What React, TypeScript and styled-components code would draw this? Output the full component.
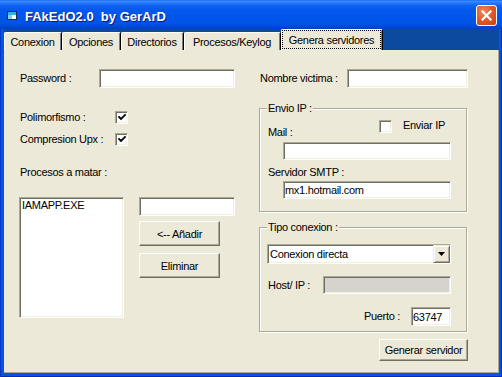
import React from "react";
import styled, { createGlobalStyle } from "styled-components";

const GlobalStyle = createGlobalStyle`
  html, body { margin: 0; padding: 0; width: 502px; height: 377px; overflow: hidden; background: #0055E5; }
  #root { width: 502px; height: 377px; }
  *, *::before, *::after { box-sizing: border-box; }
`;

const Window = styled.div`
  width: 502px;
  height: 377px;
  display: flex;
  flex-direction: column;
  font-family: "Liberation Sans", Arial, sans-serif;
  font-size: 11px;
  color: #000;
`;

const TitleBar = styled.div`
  height: 29px;
  flex: none;
  display: flex;
  align-items: center;
  padding: 0 5px 0 7px;
  background: linear-gradient(
    180deg,
    #0A5DF5 0px,
    #3D8FFF 1px,
    #2877FA 3px,
    #0B60F2 6px,
    #0558EE 10px,
    #0055EA 18px,
    #0053E4 24px,
    #0047D4 27px,
    #003FC6 29px
  );
`;

const TitleIcon = styled.svg`
  flex: none;
  margin-top: 1px;
`;

const TitleText = styled.span`
  flex: 1;
  margin-left: 8px;
  padding-top: 3px;
  color: #fff;
  font-weight: bold;
  font-size: 13px;
  white-space: pre;
  text-shadow: 1px 1px 0 #0A1A78;
`;

const CloseButton = styled.div`
  flex: none;
  width: 21px;
  height: 21px;
  margin-top: 1px;
  border: 1px solid #fff;
  border-radius: 3px;
  background: radial-gradient(circle at 35% 30%, #F08A64 0%, #E25A2C 45%, #C8400F 100%);
  display: flex;
  align-items: center;
  justify-content: center;
`;

const Frame = styled.div`
  flex: 1;
  display: flex;
  flex-direction: column;
  padding: 0 3px 4px 4px;
  background: #0055E5;
  box-shadow: inset 1px 0 0 #0838C8, inset -1px 0 0 #0030B0, inset 0 -1px 0 #0030B0;
`;

const TabStrip = styled.div`
  height: 21px;
  flex: none;
  display: flex;
  align-items: flex-end;
  background: #0B4A9E;
`;

const Tab = styled.div<{ $w: number; $active?: boolean }>`
  flex: none;
  width: ${(p) => p.$w}px;
  height: ${(p) => (p.$active ? 21 : 18)}px;
  background: #ECE9D8;
  border-left: 1px solid #fff;
  border-top: 1px solid #fff;
  border-right: 1px solid #000;
  box-shadow: inset -1px 0 0 #808080;
  border-radius: 2px 2px 0 0;
  display: flex;
  align-items: ${(p) => (p.$active ? "stretch" : "center")};
  justify-content: center;
  padding: ${(p) => (p.$active ? "0 1px 1px 0" : "0 1px 0 0")};
  white-space: nowrap;
  letter-spacing: -0.3px;
`;

const FocusRect = styled.span`
  flex: 1;
  border: 1px dotted #000;
  display: flex;
  align-items: center;
  justify-content: center;
`;

const Panel = styled.div`
  flex: 1;
  background: #ECE9D8;
  border-right: 1px solid #ACA899;
  border-bottom: 1px solid #ACA899;
  display: grid;
  grid-template-columns: 216px 209px;
  column-gap: 24px;
  align-content: start;
  padding: 19px 0 0 15px;
  letter-spacing: -0.3px;
`;

const Column = styled.div`
  display: flex;
  flex-direction: column;
  align-items: flex-start;
`;

const Row = styled.div<{ $mt?: number; $h?: number; $align?: string; $justify?: string }>`
  display: flex;
  align-items: ${(p) => p.$align ?? "center"};
  justify-content: ${(p) => p.$justify ?? "flex-start"};
  margin-top: ${(p) => p.$mt ?? 0}px;
  height: ${(p) => (p.$h ? `${p.$h}px` : "auto")};
  align-self: stretch;
`;

const Label = styled.span<{ $w?: number; $ml?: number; $mr?: number }>`
  flex: none;
  ${(p) => (p.$w ? `width: ${p.$w}px;` : "")}
  margin-left: ${(p) => p.$ml ?? 0}px;
  margin-right: ${(p) => p.$mr ?? 0}px;
  padding-left: 1px;
  line-height: 13px;
  white-space: nowrap;
`;

const sunken = `
  border: 1px solid;
  border-color: #ACA899 #FFFFFF #FFFFFF #ACA899;
  box-shadow: inset 1px 1px 0 #716F64, inset -1px -1px 0 #F1EFE2;
`;

const TextBox = styled.div<{ $w: number; $h?: number; $ml?: number; $mt?: number; $disabled?: boolean }>`
  flex: none;
  width: ${(p) => p.$w}px;
  height: ${(p) => p.$h ?? 19}px;
  margin-left: ${(p) => p.$ml ?? 0}px;
  margin-top: ${(p) => p.$mt ?? 0}px;
  background: ${(p) => (p.$disabled ? "#D6D3CE" : "#fff")};
  ${sunken}
  display: flex;
  align-items: center;
  padding: 0 2px 0 1px;
  white-space: nowrap;
  overflow: hidden;
`;

const ListBox = styled.div`
  flex: none;
  width: 105px;
  height: 121px;
  background: #fff;
  ${sunken}
  padding: 1px 2px;
  line-height: 13px;
`;

const CheckBox = styled.div`
  flex: none;
  width: 13px;
  height: 13px;
  background: #fff;
  ${sunken}
  display: flex;
  align-items: center;
  justify-content: center;
`;

const Button = styled.div<{ $w: number; $h: number; $mt?: number }>`
  flex: none;
  width: ${(p) => p.$w}px;
  height: ${(p) => p.$h}px;
  margin-top: ${(p) => p.$mt ?? 0}px;
  background: #ECE9D8;
  border: 1px solid;
  border-color: #FFFFFF #716F64 #716F64 #FFFFFF;
  box-shadow: inset -1px -1px 0 #ACA899;
  display: flex;
  align-items: center;
  justify-content: center;
  white-space: nowrap;
`;

const SideStack = styled.div`
  display: flex;
  flex-direction: column;
  align-items: flex-start;
  margin-left: 15px;
`;

const Group = styled.fieldset<{ $mt: number; $pb: number }>`
  margin: ${(p) => p.$mt}px 0 0 0;
  width: 208px;
  min-width: 0;
  padding: 0 15px ${(p) => p.$pb}px 7px;
  border: 1px solid #ACA899;
  box-shadow: inset 1px 1px 0 #fff, 1px 1px 0 #fff;
  display: flex;
  flex-direction: column;
  align-items: flex-start;
`;

const Legend = styled.legend`
  padding: 0 1px;
  line-height: 13px;
  background: #ECE9D8;
`;

const Combo = styled.div`
  flex: none;
  width: 184px;
  height: 20px;
  margin-top: 10px;
  background: #fff;
  ${sunken}
  display: flex;
  align-items: stretch;
`;

const ComboText = styled.span`
  flex: 1;
  display: flex;
  align-items: center;
  padding-left: 2px;
`;

const ComboArrow = styled.div`
  flex: none;
  width: 17px;
  background: #ECE9D8;
  border: 1px solid;
  border-color: #ECE9D8 #716F64 #716F64 #ECE9D8;
  box-shadow: inset 1px 1px 0 #fff, inset -1px -1px 0 #ACA899;
  display: flex;
  align-items: center;
  justify-content: center;
`;

const Tick = () => (
  <svg width="8" height="7" viewBox="0 0 8 7">
    <polyline points="1,3 3,5 7,1" fill="none" stroke="#000" strokeWidth="1.8" strokeLinecap="square" />
  </svg>
);

export default function App() {
  return (
    <>
      <GlobalStyle />
      <Window>
        <TitleBar>
          <TitleIcon width="10" height="9" viewBox="0 0 10 9">
            <rect x="0.5" y="0.5" width="9" height="8" fill="#fff" stroke="#1B2B4A" />
            <rect x="1" y="1" width="8" height="3" fill="#39B3C8" />
            <rect x="1" y="4" width="4" height="4" fill="#7CD4E0" />
          </TitleIcon>
          <TitleText>{"FAkEdO2.0  by GerArD"}</TitleText>
          <CloseButton>
            <svg width="11" height="11" viewBox="0 0 11 11">
              <path d="M1.5 1.5 L9.5 9.5 M9.5 1.5 L1.5 9.5" stroke="#fff" strokeWidth="2.2" strokeLinecap="square" />
            </svg>
          </CloseButton>
        </TitleBar>
        <Frame>
          <TabStrip>
            <Tab $w={58}>Conexion</Tab>
            <Tab $w={59}>Opciones</Tab>
            <Tab $w={63}>Directorios</Tab>
            <Tab $w={97}>Procesos/Keylog</Tab>
            <Tab $w={102} $active>
              <FocusRect>Genera servidores</FocusRect>
            </Tab>
          </TabStrip>
          <Panel>
            <Column>
              <Row $h={19}>
                <Label $w={80}>Password :</Label>
                <TextBox $w={136} />
              </Row>
              <Row $mt={23} $h={13}>
                <Label $w={96}>Polimorfismo :</Label>
                <CheckBox>
                  <Tick />
                </CheckBox>
              </Row>
              <Row $mt={9} $h={13}>
                <Label $w={96}>Compresion Upx :</Label>
                <CheckBox>
                  <Tick />
                </CheckBox>
              </Row>
              <Row $mt={20} $h={13}>
                <Label>Procesos a matar :</Label>
              </Row>
              <Row $mt={18} $align="flex-start">
                <ListBox>IAMAPP.EXE</ListBox>
                <SideStack>
                  <TextBox $w={96} />
                  <Button $w={81} $h={25} $mt={5}>
                    {"<-- Añadir"}
                  </Button>
                  <Button $w={81} $h={25} $mt={7}>
                    Eliminar
                  </Button>
                </SideStack>
              </Row>
            </Column>

            <Column>
              <Row $h={19}>
                <Label $w={88}>Nombre victima :</Label>
                <TextBox $w={121} />
              </Row>

              <Group $mt={14} $pb={12}>
                <Legend>Envio IP :</Legend>
                <Row $mt={3} $h={21} $align="flex-start">
                  <Label $w={112} style={{ alignSelf: "flex-end" }}>
                    Mail :
                  </Label>
                  <Row $mt={2} $align="flex-start">
                    <CheckBox />
                    <Label $ml={10} style={{ marginTop: -1 }}>
                      Enviar IP
                    </Label>
                  </Row>
                </Row>
                <TextBox $w={168} $h={18} $ml={16} $mt={3} />
                <Row $mt={6} $h={13}>
                  <Label>Servidor SMTP :</Label>
                </Row>
                <TextBox $w={168} $h={18} $ml={16} $mt={2}>
                  mx1.hotmail.com
                </TextBox>
              </Group>

              <Group $mt={9} $pb={5}>
                <Legend>Tipo conexion :</Legend>
                <Combo>
                  <ComboText>Conexion directa</ComboText>
                  <ComboArrow>
                    <svg width="7" height="4" viewBox="0 0 7 4">
                      <polygon points="0,0 7,0 3.5,4" fill="#000" />
                    </svg>
                  </ComboArrow>
                </Combo>
                <Row $mt={12} $h={18}>
                  <Label $w={56}>Host/ IP :</Label>
                  <TextBox $w={128} $h={18} $disabled />
                </Row>
                <Row $mt={13} $h={19} $justify="flex-end">
                  <Label $mr={11}>Puerto :</Label>
                  <TextBox $w={40}>63747</TextBox>
                </Row>
              </Group>

              <Row $mt={7} $justify="flex-end">
                <Button $w={89} $h={22}>
                  Generar servidor
                </Button>
              </Row>
            </Column>
          </Panel>
        </Frame>
      </Window>
    </>
  );
}
